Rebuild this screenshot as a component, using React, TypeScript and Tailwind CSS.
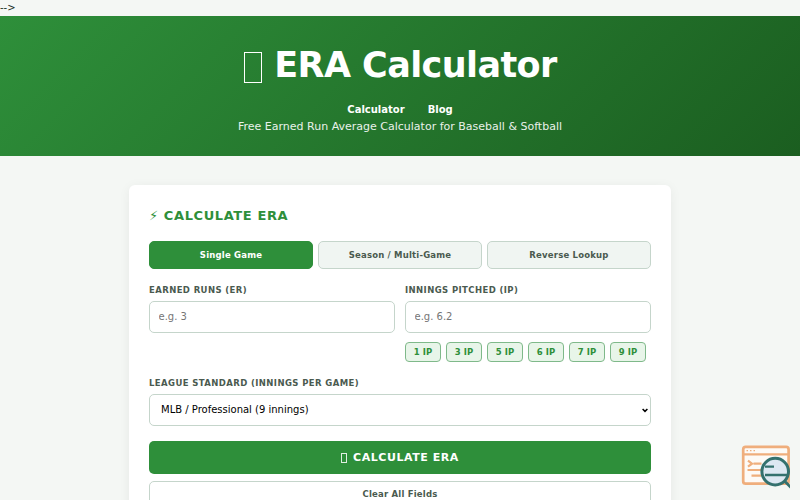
import React, { useState } from 'react';

const modes = ['Single Game', 'Season / Multi-Game', 'Reverse Lookup'];
const quickInnings = ['1', '3', '5', '6', '7', '9'];

const labelClass = 'block text-[8.5px] leading-[14px] font-bold uppercase tracking-[0.4px] text-[#4a5a4f]';
const fieldClass =
  'block w-full h-[32px] rounded-[5px] border border-[#c5d5cb] bg-white text-[10px] text-black outline-none focus:border-[#2e8f3a]';

const SearchBadge: React.FC = () => (
  <svg className="fixed left-[741px] top-[444px]" width="49" height="46" viewBox="0 0 49 46" fill="none">
    <rect x="2.2" y="2.9" width="45.4" height="36.8" rx="2.5" fill="#fdfaf6" stroke="#efae7c" strokeWidth="2.7" />
    <path d="M2 10.4h45.5" stroke="#efae7c" strokeWidth="2.4" />
    <path d="M5.5 6.6h1.5M9 6.6h1.5M12.5 6.6h1.5" stroke="#efae7c" strokeWidth="1.4" />
    <path d="M7 16.7l4 3-4 3M12.5 19.7h8M6.5 26h14M10.5 31.6h10" stroke="#efae7c" strokeWidth="2.2" />
    <circle cx="34.2" cy="27.6" r="13.3" fill="#dde8f2" stroke="#34716e" strokeWidth="3" />
    <path d="M43.5 37l7 7" stroke="#34716e" strokeWidth="2.8" />
    <path d="M24 22.6h9M24 31h22" stroke="#34716e" strokeWidth="2.3" />
  </svg>
);

const App: React.FC = () => {
  const [mode, setMode] = useState(modes[0]);
  const [runs, setRuns] = useState('');
  const [innings, setInnings] = useState('');

  const clearFields = () => {
    setRuns('');
    setInnings('');
  };

  return (
    <div className="h-screen overflow-hidden bg-[#f4f7f4] font-['DejaVu_Sans',sans-serif] text-[10px] leading-[16px] text-[#1a2e1f]">
      <div>--&gt;</div>

      {/* Header */}
      <header className="h-[139.5px] bg-[linear-gradient(135deg,#2e8f3a_0%,#1b5e20_100%)] pt-[21px] text-center text-white">
        <h1 className="flex items-center justify-center pl-px text-[35px] leading-[57px] font-bold tracking-[-0.6px]">
          <span className="mt-[3px] mr-[12px] h-[31px] w-[18px] border-[1.5px] border-white" />
          ERA Calculator
        </h1>
        <nav className="mt-[8px] flex justify-center gap-[23px] font-bold">
          <a href="#calculator">Calculator</a>
          <a href="#blog">Blog</a>
        </nav>
        <p className="text-[11px] leading-[18px] opacity-90">
          Free Earned Run Average Calculator for Baseball &amp; Softball
        </p>
      </header>

      {/* Calculator card */}
      <main className="mx-auto mt-[29.5px] h-[400px] w-[542px] rounded-[6px] bg-white px-[20px] pt-[19.5px] shadow-[0_2px_12px_rgba(0,0,0,0.06)]">
        <h2 className="text-[13px] leading-[21px] font-bold tracking-[0.6px] text-[#2e8f3a]">⚡ CALCULATE ERA</h2>

        <div className="mt-[15px] grid grid-cols-3 gap-[5px]">
          {modes.map((item) => (
            <button
              key={item}
              onClick={() => setMode(item)}
              className={`h-[28px] rounded-[5px] border text-[8.5px] font-bold tracking-[0.2px] ${
                item === mode
                  ? 'border-[#2e8f3a] bg-[#2e8f3a] text-white'
                  : 'border-[#c5d5cb] bg-[#f0f5f2] text-[#4a5a4f]'
              }`}
            >
              {item}
            </button>
          ))}
        </div>

        <div className="mt-[14px] grid grid-cols-2 gap-[10px]">
          <div>
            <label className={labelClass}>Earned Runs (ER)</label>
            <input
              className={`${fieldClass} mt-[4px] px-[8.5px] placeholder:text-[#757575]`}
              placeholder="e.g. 3"
              value={runs}
              onChange={(e) => setRuns(e.target.value)}
            />
          </div>
          <div>
            <label className={labelClass}>Innings Pitched (IP)</label>
            <input
              className={`${fieldClass} mt-[4px] px-[8.5px] placeholder:text-[#757575]`}
              placeholder="e.g. 6.2"
              value={innings}
              onChange={(e) => setInnings(e.target.value)}
            />
            <div className="mt-[9px] flex gap-[5px]">
              {quickInnings.map((value) => (
                <button
                  key={value}
                  onClick={() => setInnings(value)}
                  className="h-[20px] w-[36px] rounded-[4px] border border-[#7fb98a] bg-[#e8f5e9] text-[8.5px] leading-[18px] font-bold text-[#2e8f3a]"
                >
                  {value} IP
                </button>
              ))}
            </div>
          </div>
        </div>

        <div className="mt-[14px]">
          <label className={labelClass}>League Standard (Innings Per Game)</label>
          <div className="relative mt-[4px]">
            <select className={`${fieldClass} appearance-none px-[11px]`}>
              <option>MLB / Professional (9 innings)</option>
              <option>College (9 innings)</option>
              <option>High School / Softball (7 innings)</option>
              <option>Little League (6 innings)</option>
            </select>
            <svg className="pointer-events-none absolute top-[14px] right-[3px]" width="6" height="5" viewBox="0 0 6 5" fill="none">
              <path d="M0.6 1L3 3.4 5.4 1" stroke="#000" strokeWidth="1.5" />
            </svg>
          </div>
        </div>

        <button className="mt-[15px] flex h-[33px] w-full items-center justify-center rounded-[5px] bg-[#2e8f3a] pt-px text-[11px] font-bold tracking-[0.55px] text-white">
          <span className="mr-[6px] h-[10px] w-[6px] border border-white/85" />
          CALCULATE ERA
        </button>
        <button
          onClick={clearFields}
          className="mt-[7px] block h-[26px] w-full rounded-[5px] border border-[#c5d5cb] bg-white text-[8.5px] font-bold tracking-[0.2px] text-[#4a5a4f]"
        >
          Clear All Fields
        </button>
      </main>

      <SearchBadge />
    </div>
  );
};

export default App;
